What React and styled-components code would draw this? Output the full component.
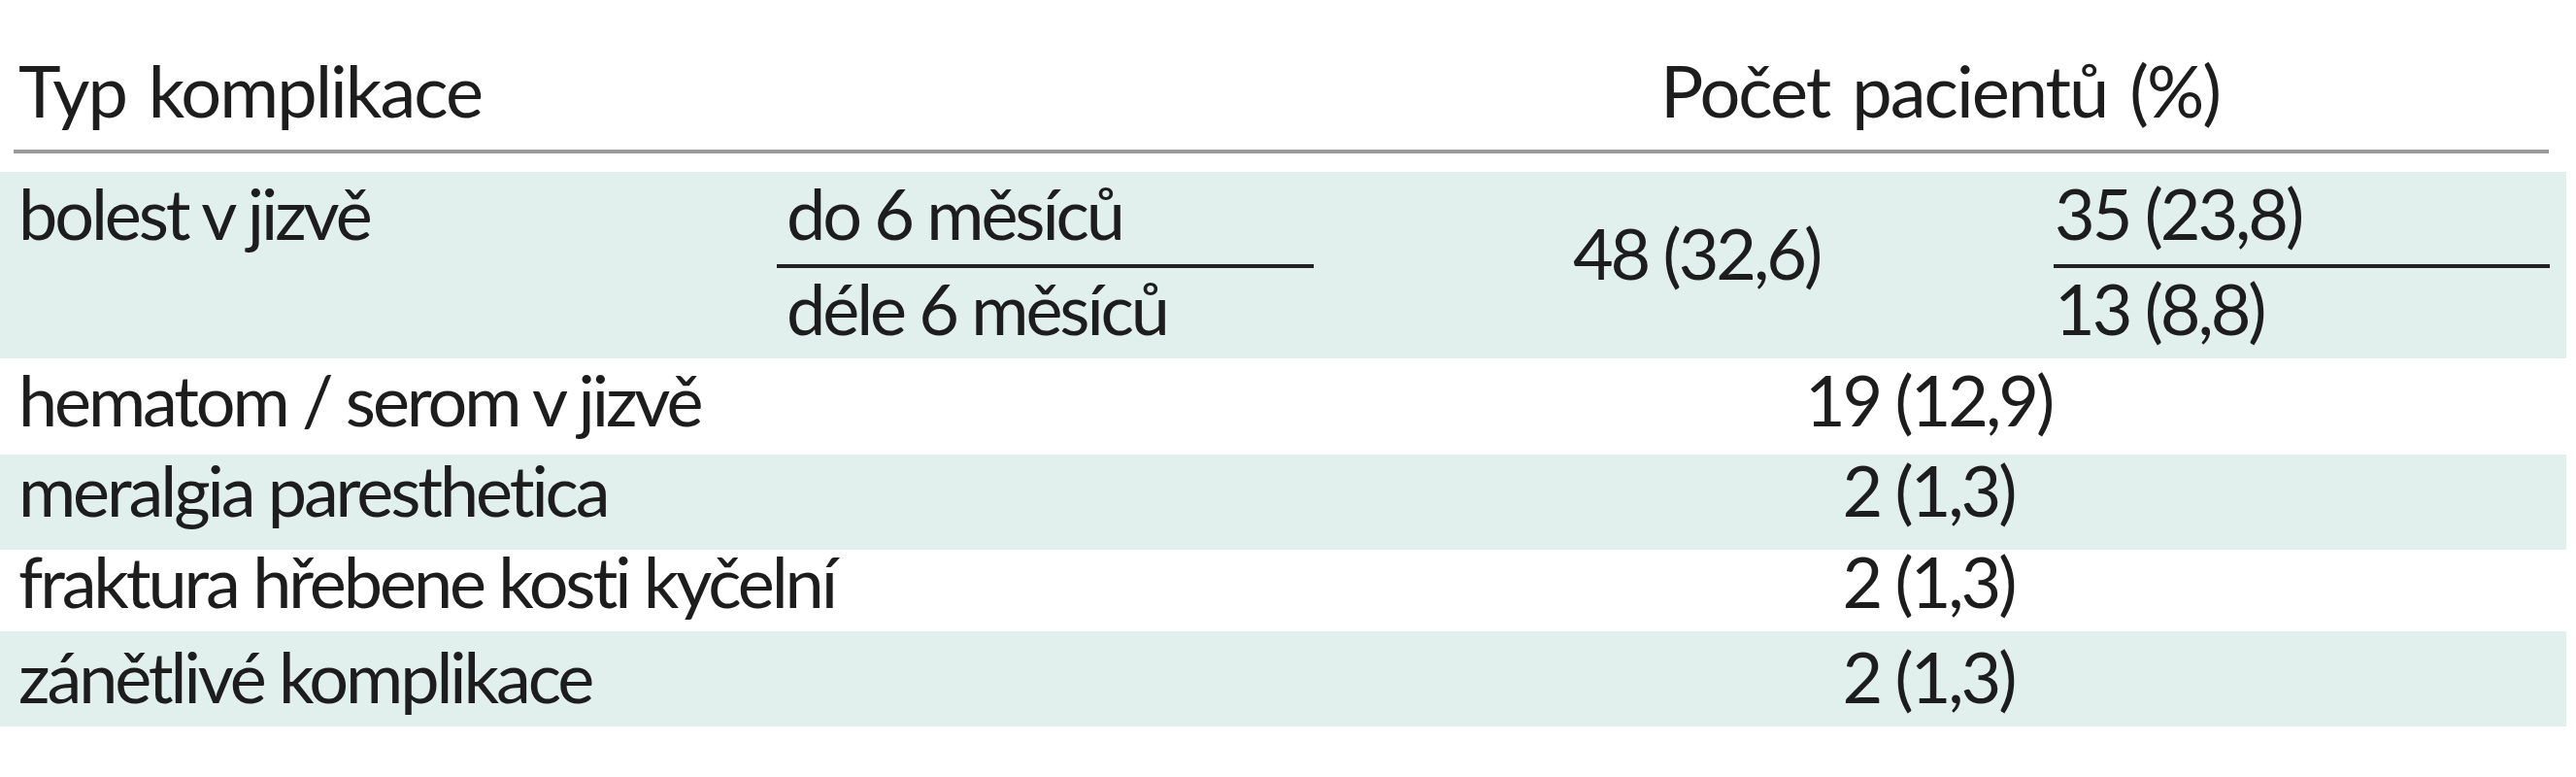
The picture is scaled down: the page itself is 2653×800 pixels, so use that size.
import React from "react";
import styled, { createGlobalStyle } from "styled-components";

const GlobalStyle = createGlobalStyle`
  body {
    margin: 0;
    background: #ffffff;
    font-family: Lato, "Open Sans", sans-serif;
    color: #1d1d1d;
  }
`;

const COLUMNS = "800px 553px 762px 528px";

const Table = styled.div`
  width: 2643px;
  font-size: 72px;
  line-height: 60px;
  letter-spacing: -3.1px;
  white-space: nowrap;
`;

const Head = styled.div`
  display: grid;
  grid-template-columns: ${COLUMNS};
  padding-top: 63px;
  font-size: 74px;
  letter-spacing: -2px;
  word-spacing: 6px;
`;

const HeadRule = styled.div`
  height: 4px;
  margin: 31px 18px 19px 14px;
  background: #9a9a9a;
`;

const Row = styled.div`
  display: grid;
  grid-template-columns: ${COLUMNS};
  box-sizing: border-box;
  height: ${(p) => p.$height}px;
  padding-top: ${(p) => p.$top}px;
  background: ${(p) => (p.$shaded ? "#e2f0ed" : "transparent")};
`;

const Label = styled.div`
  grid-column: ${(p) => (p.$wide ? "1 / 3" : "1 / 2")};
  padding-left: 19px;
`;

const Value = styled.div`
  grid-column: ${(p) => (p.$wide ? "3 / 5" : "3 / 4")};
  text-align: center;
  padding-top: ${(p) => p.$top || 0}px;
  padding-left: ${(p) => p.$shiftLeft || 0}px;
  padding-right: ${(p) => p.$shiftRight || 0}px;
`;

const SubStack = styled.div`
  display: flex;
  flex-direction: column;
  margin-right: ${(p) => p.$right || 0}px;
`;

const SubLine = styled.div`
  padding-left: ${(p) => p.$indent}px;
  padding-top: ${(p) => (p.$lower ? 11 : 0)}px;
  padding-bottom: ${(p) => (p.$lower ? 0 : 23)}px;
  border-bottom: ${(p) => (p.$lower ? "none" : "4px solid #222222")};
`;

const rows = [
  { label: "hematom / serom v jizvě", value: "19 (12,9)", height: 99, top: 12 },
  { label: "meralgia paresthetica", value: "2 (1,3)", height: 98, top: 6, shaded: true },
  { label: "fraktura hřebene kosti kyčelní", value: "2 (1,3)", height: 84, top: 2 },
  { label: "zánětlivé komplikace", value: "2 (1,3)", height: 98, top: 16, shaded: true },
];

export default function App() {
  return (
    <>
      <GlobalStyle />
      <Table>
        <Head>
          <Label $wide>Typ komplikace</Label>
          <Value $wide>Počet pacientů (%)</Value>
        </Head>
        <HeadRule />

        <Row $shaded $height={192} $top={12}>
          <Label>bolest v jizvě</Label>
          <SubStack>
            <SubLine $indent={10}>do 6 měsíců</SubLine>
            <SubLine $indent={10} $lower>
              déle 6 měsíců
            </SubLine>
          </SubStack>
          <Value $top={41} $shiftLeft={26}>
            48 (32,6)
          </Value>
          <SubStack $right={17}>
            <SubLine $indent={1}>35 (23,8)</SubLine>
            <SubLine $indent={1} $lower>
              13 (8,8)
            </SubLine>
          </SubStack>
        </Row>

        {rows.map((r) => (
          <Row key={r.label} $shaded={r.shaded} $height={r.height} $top={r.top}>
            <Label $wide>{r.label}</Label>
            <Value $wide $shiftRight={24}>
              {r.value}
            </Value>
          </Row>
        ))}
      </Table>
    </>
  );
}
